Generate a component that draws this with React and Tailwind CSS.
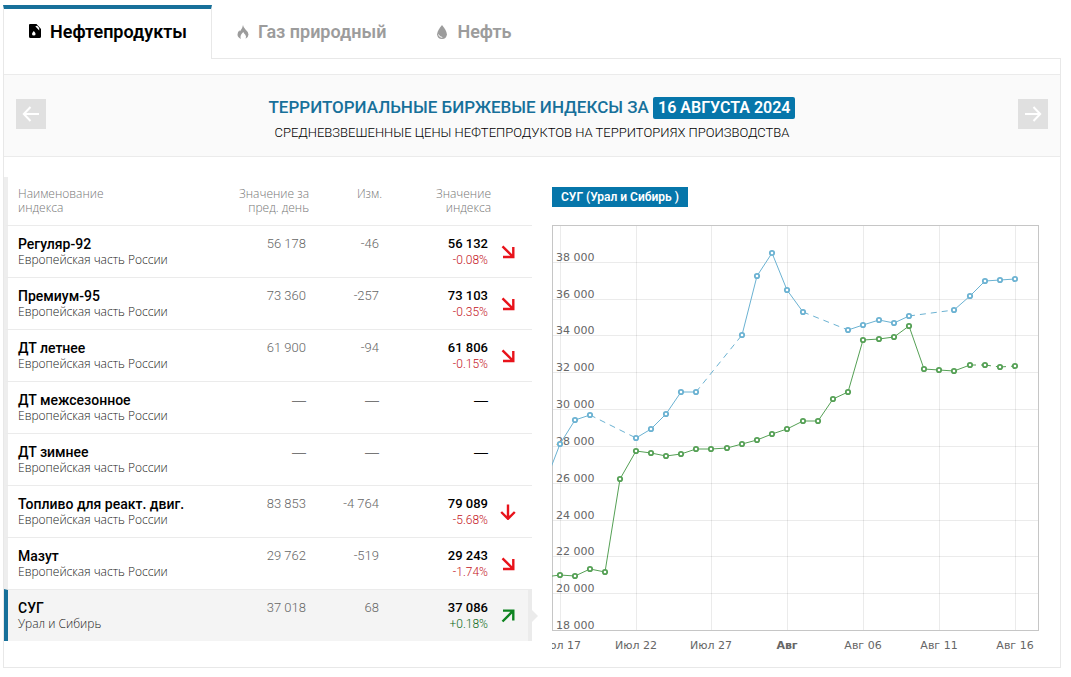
import React from "react";

const TABS = [
  { label: "Нефтепродукты", icon: CanisterIcon, active: true },
  { label: "Газ природный", icon: FlameIcon },
  { label: "Нефть", icon: DropIcon },
];

const EUROPE = "Европейская часть России";

const ROWS = [
  { name: "Регуляр-92", region: EUROPE, prev: "56 178", diff: "-46", value: "56 132", pct: "-0.08%", trend: "falling" },
  { name: "Премиум-95", region: EUROPE, prev: "73 360", diff: "-257", value: "73 103", pct: "-0.35%", trend: "falling" },
  { name: "ДТ летнее", region: EUROPE, prev: "61 900", diff: "-94", value: "61 806", pct: "-0.15%", trend: "falling" },
  { name: "ДТ межсезонное", region: EUROPE, prev: "—", diff: "—", value: "—" },
  { name: "ДТ зимнее", region: EUROPE, prev: "—", diff: "—", value: "—" },
  { name: "Топливо для реакт. двиг.", region: EUROPE, prev: "83 853", diff: "-4 764", value: "79 089", pct: "-5.68%", trend: "down" },
  { name: "Мазут", region: EUROPE, prev: "29 762", diff: "-519", value: "29 243", pct: "-1.74%", trend: "falling" },
  { name: "СУГ", region: "Урал и Сибирь", prev: "37 018", diff: "68", value: "37 086", pct: "+0.18%", trend: "rising", selected: true },
];

function CanisterIcon() {
  return (
    <svg width="14" height="14" viewBox="0 0 14 14" aria-hidden="true">
      <path
        fillRule="evenodd"
        fill="currentColor"
        d="M2 0H8.5L13 5V12.5Q13 14 11.5 14H2.500Q1 14 1 12.500V1Q1 0 2 0ZM5.800 7Q4 8.800 4 10Q4.100 11.600 5.800 11.600Q7.500 11.600 7.600 10Q7.600 8.800 5.800 7ZM7.300 2.200L11.200 6.400V3.900L9.200 1.800Z"
      />
    </svg>
  );
}

function FlameIcon() {
  return (
    <svg width="14" height="14" viewBox="0 0 14 14" aria-hidden="true">
      <path
        fill="currentColor"
        d="M7 0Q7.200 2.300 9.500 4.500Q12.500 7 12.500 9.500Q12.300 12.500 9.600 13.800Q10.600 11.500 9.300 9.800Q8 8.500 7.300 7Q5.800 8.500 4.900 10Q4 12 4.900 13.900Q1.500 12.500 1.500 9.500Q1.600 7 3.400 5.200L3.900 6.600Q6.600 3.500 7 0Z"
      />
    </svg>
  );
}

function DropIcon() {
  return (
    <svg width="14" height="14" viewBox="0 0 14 14" aria-hidden="true">
      <path fill="currentColor" d="M7 0Q11.900 6 11.900 9.200Q11.700 14 7 14Q2.200 14 2.100 9.200Q2.100 6 7 0Z" />
      <path fill="none" stroke="#fff" strokeWidth="1" d="M3.500 9.500Q4.200 12.300 7.300 12.400" />
    </svg>
  );
}

function NavArrow({ flip }) {
  return (
    <svg width="18" height="16" viewBox="0 0 18 16" fill="none" stroke="#fff" strokeWidth="2" className={flip ? "-scale-x-100" : ""} aria-hidden="true">
      <path d="M8.500 1L1.800 8L8.500 15M2 8H17" />
    </svg>
  );
}

const TREND_PATHS = {
  falling: "M2.500 2.300L12.700 12.500M3 13H13.300V3",
  down: "M8 0.500V14.500M1.200 8L8 14.800L14.800 8",
  rising: "M2.500 13.500L12.700 3.200M3 2.600H13.300V12.600",
};

function TrendArrow({ kind }) {
  return (
    <svg
      width="16"
      height="16"
      viewBox="0 0 16 16"
      fill="none"
      strokeWidth="2.400"
      className={kind === "rising" ? "stroke-[#0e8420]" : "stroke-[#e8131b]"}
      aria-hidden="true"
    >
      <path d={TREND_PATHS[kind]} />
    </svg>
  );
}

function Tabs() {
  return (
    <nav className="flex h-[54px] text-[18px] font-semibold">
      {TABS.map(({ label, icon: Icon, active }) => (
        <a
          key={label}
          href="#"
          className={
            active
              ? "flex w-[209px] items-center justify-center gap-2 border-x border-t-4 border-x-[#e8e8e8] border-t-[#17709a] pb-1.5 text-black"
              : "flex items-center gap-2 border-b border-[#e8e8e8] pl-6 pr-[25px] text-[#9c9c9c]"
          }
        >
          <Icon />
          {label}
        </a>
      ))}
      <div className="flex-1 border-b border-[#e8e8e8]" />
    </nav>
  );
}

function TitleBand() {
  return (
    <header className="flex items-start justify-between border-y border-[#ebebeb] bg-[#fafafa] px-3 pb-3 pt-[18px]">
      <button type="button" aria-label="Предыдущий день" className="mt-1.5 flex size-[30px] items-center justify-center bg-[#e0e0e0]">
        <NavArrow />
      </button>
      <div className="text-center">
        <h1 className="text-[17px] font-medium leading-[28px] text-[#17709a]">
          ТЕРРИТОРИАЛЬНЫЕ БИРЖЕВЫЕ ИНДЕКСЫ ЗА{" "}
          <span className="inline-block rounded-xs bg-[#0676aa] px-[5px] text-[16px] font-semibold leading-[22px] text-white">16 АВГУСТА 2024</span>
        </h1>
        <p className="text-[13px] font-light leading-[23px] text-black">СРЕДНЕВЗВЕШЕННЫЕ ЦЕНЫ НЕФТЕПРОДУКТОВ НА ТЕРРИТОРИЯХ ПРОИЗВОДСТВА</p>
      </div>
      <button type="button" aria-label="Следующий день" className="mt-1.5 flex size-[30px] items-center justify-center bg-[#e0e0e0]">
        <NavArrow flip />
      </button>
    </header>
  );
}

function Amount({ children, strong }) {
  if (children === "—") {
    return (
      <span className={strong ? "block font-['Liberation_Sans',sans-serif] text-[14px] text-black" : "block font-['Liberation_Sans',sans-serif] text-[14px] text-[#777]"}>
        —
      </span>
    );
  }
  return <span className={strong ? "block text-[13px] font-medium text-black" : "block text-[13px] font-light text-[#666]"}>{children}</span>;
}

function IndexTable() {
  return (
    <div className="relative w-1/2">
      <table className="w-full table-fixed border-separate border-spacing-0">
        <colgroup>
          <col />
          <col className="w-[95px]" />
          <col className="w-[73px]" />
          <col className="w-[109px]" />
          <col className="w-[41px]" />
        </colgroup>
        <thead>
          <tr className="h-12 align-top text-right font-['Open_Sans',sans-serif] text-[12px] leading-[14px] text-[#777] *:pt-2.5 *:font-light">
            <th scope="col" className="border-l-4 border-[#eeeeee] pl-2.5 text-left">
              Наименование
              <br />
              индекса
            </th>
            <th scope="col">
              Значение за
              <br />
              пред. день
            </th>
            <th scope="col">Изм.</th>
            <th scope="col">
              Значение
              <br />
              индекса
            </th>
            <td />
          </tr>
        </thead>
        <tbody>
          {ROWS.map((row) => (
            <tr
              key={row.name}
              className={
                row.selected
                  ? "h-[52px] bg-[#f4f4f4] align-top text-right leading-4 *:border-t *:border-t-[#ebebeb] *:pt-2.5"
                  : "h-[52px] align-top text-right leading-4 *:border-t *:border-t-[#ebebeb] *:pt-2.5"
              }
            >
              <td className={row.selected ? "border-l-4 border-l-[#17709a] pl-2.5 text-left" : "border-l-4 border-l-[#eeeeee] pl-2.5 text-left"}>
                <a href="#" className="block whitespace-nowrap text-[14px] font-medium text-black">
                  {row.name}
                </a>
                <span className="block whitespace-nowrap font-['Open_Sans',sans-serif] text-[12px] font-light text-[#222]">{row.region}</span>
              </td>
              <td className="pr-[3px]">
                <Amount>{row.prev}</Amount>
              </td>
              <td className="pr-[3px]">
                <Amount>{row.diff}</Amount>
              </td>
              <td className="pr-[3px]">
                <Amount strong>{row.value}</Amount>
                <span className={row.trend === "rising" ? "block text-[12px] font-light text-[#0e6b1a]" : "block text-[12px] font-light text-[#c4141c]"}>
                  {row.pct}
                </span>
              </td>
              <td className={row.selected ? "border-r-4 border-r-[#ebebeb] pl-[9px]" : "pl-[9px]"}>
                <span className="flex h-8 items-center">{row.trend && <TrendArrow kind={row.trend} />}</span>
              </td>
            </tr>
          ))}
        </tbody>
      </table>
      <svg width="6" height="12" viewBox="0 0 6 12" className="absolute bottom-[19px] left-full" aria-hidden="true">
        <path d="M0 0L6 6L0 12Z" fill="#ebebeb" />
      </svg>
    </div>
  );
}

const BLUE = [
  [-7, 258], [8, 219], [23, 195], [38, 190], [84, 213], [99, 204], [114, 189], [129, 167], [144, 167],
  [190, 110], [205, 51], [220, 28], [235, 65], [251, 87], [296, 105], [311, 100], [327, 95], [342, 98],
  [357, 91], [402, 85], [418, 71], [433, 56], [448, 55], [463, 54],
];
const BLUE_GAPS = [3, 8, 13, 18];

const GREEN = [
  [-7, 352], [8, 350], [23, 351], [38, 344], [53, 347], [68, 254], [84, 226], [99, 228], [114, 231], [129, 229],
  [144, 224], [159, 224], [175, 223], [190, 219], [205, 215], [220, 209], [235, 204], [251, 196], [266, 196],
  [281, 174], [296, 167], [311, 115], [327, 114], [342, 112], [357, 101], [372, 144], [387, 145], [402, 146],
  [418, 140], [433, 140], [448, 142], [463, 141],
];
const GREEN_GAPS = [28, 29, 30];

function Series({ points, gaps, color }) {
  return (
    <g stroke={color}>
      {points.slice(1).map(([x, y], i) => (
        <line
          key={x}
          x1={points[i][0]}
          y1={points[i][1]}
          x2={x}
          y2={y}
          strokeDasharray={gaps.includes(i) ? "6 5" : undefined}
        />
      ))}
      {points.slice(1).map(([x, y]) => (
        <circle key={x} cx={x} cy={y} r="2.200" fill="#fff" strokeWidth="1.800" />
      ))}
    </g>
  );
}

const Y_TICKS = [
  [37, "38 000"], [74, "36 000"], [110, "34 000"], [147, "32 000"], [184, "30 000"], [221, "28 000"],
  [258, "26 000"], [295, "24 000"], [331, "22 000"], [368, "20 000"], [405, "18 000"],
];

const X_TICKS = [
  [8, "Июл 17"], [84, "Июл 22"], [159, "Июл 27"], [235, "Авг"], [311, "Авг 06"], [387, "Авг 11"], [463, "Авг 16"],
];

function PriceChart() {
  return (
    <svg viewBox="0 0 488 430" className="block w-full font-['DejaVu_Sans',sans-serif] text-[11px]" role="img" aria-label="СУГ (Урал и Сибирь)">
      <g stroke="#000" strokeOpacity="0.080">
        {Y_TICKS.map(([y]) => (
          <line key={y} x1="0" x2="487" y1={y + 0.5} y2={y + 0.5} />
        ))}
        {X_TICKS.map(([x]) => (
          <line key={x} x1={x + 0.5} x2={x + 0.5} y1="0" y2="405" />
        ))}
      </g>
      <rect x="0.5" y="0.5" width="486" height="405" fill="none" stroke="#c6c6c6" />
      <g fill="#666">
        {Y_TICKS.map(([y, label]) => (
          <text key={y} x="4" y={y - 1}>
            {label}
          </text>
        ))}
        {X_TICKS.map(([x, label]) => (
          <text key={x} x={x} y="424" textAnchor="middle" className={label === "Авг" ? "font-bold" : ""}>
            {label}
          </text>
        ))}
      </g>
      <Series points={BLUE} gaps={BLUE_GAPS} color="#6bb2d2" />
      <Series points={GREEN} gaps={GREEN_GAPS} color="#55a055" />
    </svg>
  );
}

export default function App() {
  return (
    <main className="ml-[3px] mr-2.5 pt-[5px] font-['Roboto',sans-serif]">
      <Tabs />
      <section className="border-x border-b border-[#e8e8e8] pt-[15px]">
        <TitleBand />
        <div className="flex items-start pb-3 pt-5">
          <IndexTable />
          <div className="flex w-1/2 flex-col items-start px-5 pt-2.5">
            <h2 className="bg-[#0676aa] px-[9px] text-[12px] font-semibold leading-5 text-white">СУГ (Урал и Сибирь )</h2>
            <div className="mt-[18px] w-full">
              <PriceChart />
            </div>
          </div>
        </div>
      </section>
    </main>
  );
}
